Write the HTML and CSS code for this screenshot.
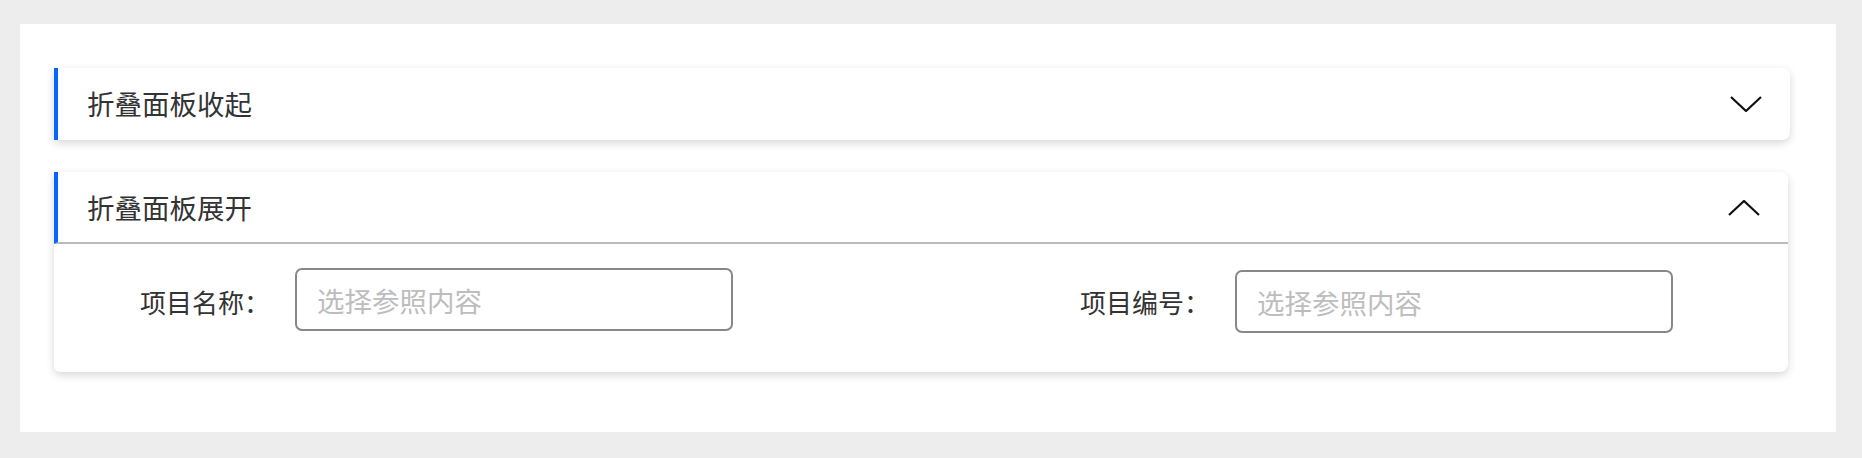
FILE: index.html
```html
<!DOCTYPE html>
<html lang="zh-CN">
<head>
<meta charset="utf-8">
<title>折叠面板</title>
<link rel="stylesheet" href="styles.css">
</head>
<body>
<div class="page">
  <section class="panel">
    <div class="panel-header">
      <span class="panel-title">折叠面板收起</span>
      <svg class="chevron" width="32" height="16" viewBox="0 0 32 16" aria-hidden="true"><polyline points="1,1 16,15 31,1" fill="none" stroke="#111" stroke-width="2.2"/></svg>
    </div>
  </section>
  <section class="panel panel--open">
    <div class="panel-header panel-header--open">
      <span class="panel-title">折叠面板展开</span>
      <svg class="chevron" width="32" height="16" viewBox="0 0 32 16" aria-hidden="true"><polyline points="1,15 16,1 31,15" fill="none" stroke="#111" stroke-width="2.2"/></svg>
    </div>
    <div class="panel-body">
      <div class="field">
        <label class="field-label">项目名称：</label>
        <input class="field-input" type="text" placeholder="选择参照内容">
      </div>
      <div class="field field--second">
        <label class="field-label">项目编号：</label>
        <input class="field-input" type="text" placeholder="选择参照内容">
      </div>
    </div>
  </section>
</div>
</body>
</html>
```
FILE: styles.css
```css
html, body {
  margin: 0;
  padding: 0;
}
body {
  background: #ededed;
  padding: 24px 26px 26px 20px;
  font-family: "Noto Sans CJK SC", "Noto Sans", sans-serif;
  color: #333;
}
.page {
  background: #fff;
  height: 408px;
  box-sizing: border-box;
  padding: 44px 46px 0 34px;
  display: flex;
  flex-direction: column;
  gap: 32px;
}
.panel {
  background: #fff;
  border-radius: 0 8px 8px 0;
  box-shadow: 0 3px 8px rgba(0, 0, 0, 0.16);
}
.panel--open {
  margin-right: 2px;
  border-radius: 0 8px 8px 6px;
}
.panel-header {
  height: 72px;
  display: flex;
  align-items: center;
  justify-content: space-between;
  border-left: 4px solid #0a64ff;
  padding: 0 28px 0 29px;
  box-sizing: border-box;
}
.panel-header--open {
  border-bottom: 2px solid #bcbcbc;
  padding-top: 2px;
}
.panel-title {
  font-size: 27.5px;
  line-height: 1;
  color: #333;
}
.chevron {
  display: block;
}
.panel-body {
  display: flex;
  align-items: flex-start;
  gap: 347px;
  padding: 24px 0 39px 86px;
}
.field {
  display: flex;
  align-items: center;
}
.field--second {
  margin-top: 2px;
}
.field-label {
  width: 155px;
  font-size: 26px;
  line-height: 1;
  color: #333;
  position: relative;
  top: 2px;
}
.field--second .field-label {
  top: 0;
}
.field-input {
  width: 438px;
  height: 63px;
  box-sizing: border-box;
  border: 2px solid #888;
  border-radius: 7px;
  padding: 0 20px;
  font-family: "Noto Sans CJK SC", "Noto Sans", sans-serif;
  font-size: 27.5px;
  color: #333;
  outline: none;
  background: #fff;
}
.field-input::placeholder {
  color: #bdbdbd;
}
```
